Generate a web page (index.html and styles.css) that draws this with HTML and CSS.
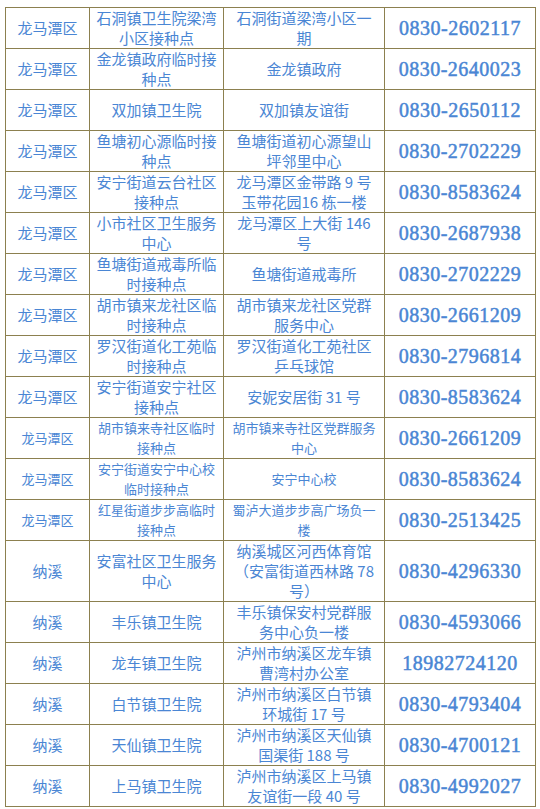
FILE: index.html
```html
<!DOCTYPE html>
<html lang="zh-CN">
<head>
<meta charset="utf-8">
<title>接种点</title>
<link rel="stylesheet" href="styles.css">
</head>
<body>
<div class="table">
  <div class="c">龙马潭区</div><div class="c">石洞镇卫生院梁湾<br>小区接种点</div><div class="c">石洞街道梁湾小区一<br>期</div><div class="c tel">0830-2602117</div>
  <div class="c">龙马潭区</div><div class="c">金龙镇政府临时接<br>种点</div><div class="c">金龙镇政府</div><div class="c tel">0830-2640023</div>
  <div class="c">龙马潭区</div><div class="c">双加镇卫生院</div><div class="c">双加镇友谊街</div><div class="c tel">0830-2650112</div>
  <div class="c">龙马潭区</div><div class="c">鱼塘初心源临时接<br>种点</div><div class="c">鱼塘街道初心源望山<br>坪邻里中心</div><div class="c tel">0830-2702229</div>
  <div class="c">龙马潭区</div><div class="c">安宁街道云台社区<br>接种点</div><div class="c">龙马潭区金带路 9 号<br>玉带花园16 栋一楼</div><div class="c tel">0830-8583624</div>
  <div class="c">龙马潭区</div><div class="c">小市社区卫生服务<br>中心</div><div class="c">龙马潭区上大街 146<br>号</div><div class="c tel">0830-2687938</div>
  <div class="c">龙马潭区</div><div class="c">鱼塘街道戒毒所临<br>时接种点</div><div class="c">鱼塘街道戒毒所</div><div class="c tel">0830-2702229</div>
  <div class="c">龙马潭区</div><div class="c">胡市镇来龙社区临<br>时接种点</div><div class="c">胡市镇来龙社区党群<br>服务中心</div><div class="c tel">0830-2661209</div>
  <div class="c">龙马潭区</div><div class="c">罗汉街道化工苑临<br>时接种点</div><div class="c">罗汉街道化工苑社区<br>乒乓球馆</div><div class="c tel">0830-2796814</div>
  <div class="c">龙马潭区</div><div class="c">安宁街道安宁社区<br>接种点</div><div class="c">安妮安居街 31 号</div><div class="c tel">0830-8583624</div>
  <div class="c sm">龙马潭区</div><div class="c sm">胡市镇来寺社区临时<br>接种点</div><div class="c sm">胡市镇来寺社区党群服务<br>中心</div><div class="c tel">0830-2661209</div>
  <div class="c sm">龙马潭区</div><div class="c sm">安宁街道安宁中心校<br>临时接种点</div><div class="c sm">安宁中心校</div><div class="c tel">0830-8583624</div>
  <div class="c sm">龙马潭区</div><div class="c sm">红星街道步步高临时<br>接种点</div><div class="c sm">蜀泸大道步步高广场负一<br>楼</div><div class="c tel">0830-2513425</div>
  <div class="c">纳溪</div><div class="c">安富社区卫生服务<br>中心</div><div class="c">纳溪城区河西体育馆<br>（安富街道西林路 78<br>号）</div><div class="c tel">0830-4296330</div>
  <div class="c">纳溪</div><div class="c">丰乐镇卫生院</div><div class="c">丰乐镇保安村党群服<br>务中心负一楼</div><div class="c tel">0830-4593066</div>
  <div class="c">纳溪</div><div class="c">龙车镇卫生院</div><div class="c">泸州市纳溪区龙车镇<br>曹湾村办公室</div><div class="c tel">18982724120</div>
  <div class="c">纳溪</div><div class="c">白节镇卫生院</div><div class="c">泸州市纳溪区白节镇<br>环城街 17 号</div><div class="c tel">0830-4793404</div>
  <div class="c">纳溪</div><div class="c">天仙镇卫生院</div><div class="c">泸州市纳溪区天仙镇<br>国渠街 188 号</div><div class="c tel">0830-4700121</div>
  <div class="c">纳溪</div><div class="c">上马镇卫生院</div><div class="c">泸州市纳溪区上马镇<br>友谊街一段 40 号</div><div class="c tel">0830-4992027</div>
</div>
</body>
</html>
```

FILE: styles.css
```css
html, body {
  margin: 0;
  padding: 0;
  background: #ffffff;
}
body {
  padding: 7px 0 0 5px;
  font-family: "Noto Sans CJK SC", "Noto Sans", sans-serif;
}
.table {
  display: grid;
  grid-template-columns: 83px 133px 160px 150px;
  gap: 1px;
  padding: 1px;
  width: max-content;
  background: #8c804f;
}
.c {
  background: #ffffff;
  min-height: 40px;
  padding: 0 4px;
  display: flex;
  align-items: center;
  justify-content: center;
  text-align: center;
  font-size: 15px;
  line-height: 20px;
  color: #4a86d4;
  white-space: nowrap;
}
.sm {
  font-size: 13px;
}
.tel {
  font-family: "Liberation Serif", serif;
  font-weight: normal;
  font-size: 20px;
  letter-spacing: 0.5px;
  -webkit-text-stroke: 0.5px #4a86d4;
}
```
